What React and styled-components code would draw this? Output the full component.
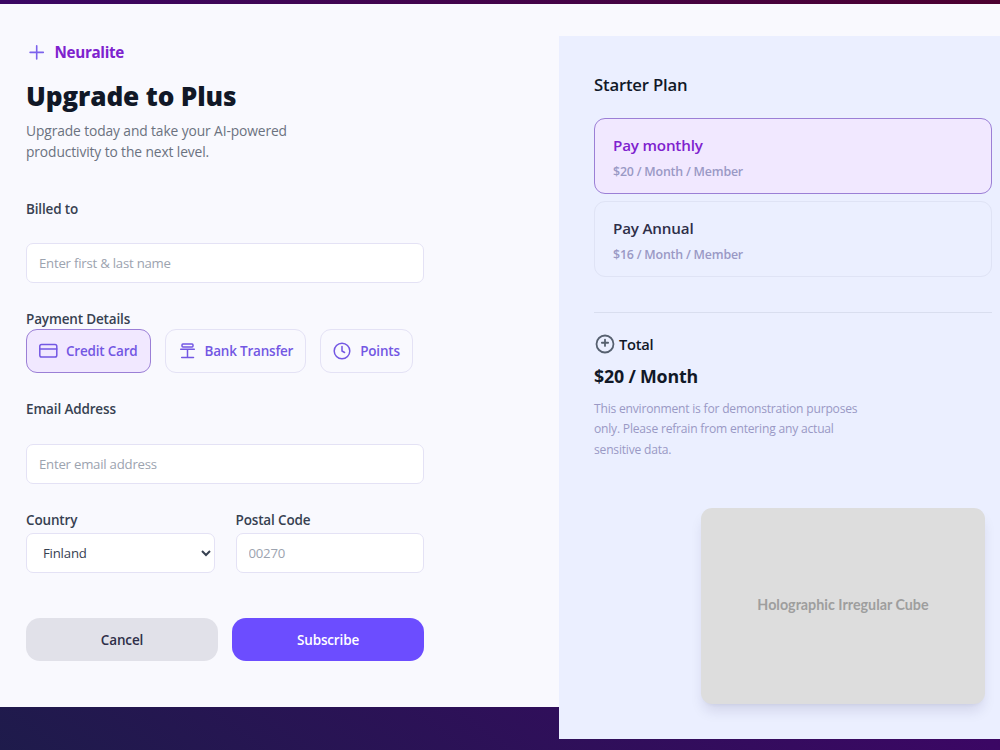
import React, { useState } from 'react';
import { createGlobalStyle, styled } from 'styled-components';

const GlobalStyle = createGlobalStyle`
  * {
    box-sizing: border-box;
  }

  body {
    margin: 0;
    font-family: 'Open Sans', 'Noto Sans', sans-serif;
    color: #111827;
  }

  h1, h2, h3, p {
    margin: 0;
  }

  button, input, select {
    font-family: inherit;
  }
`;

const Page = styled.main`
  height: 750px;
  padding-top: 4px;
  overflow: hidden;
  background: linear-gradient(to top right, #1e1b4b, #3b0764, #4c0030);
`;

const Card = styled.div`
  height: 703px;
  display: grid;
  grid-template-columns: 559px 1fr;
  background: #f9f9fe;
`;

const Checkout = styled.section`
  padding: 38px 0 0 26px;
`;

const Form = styled.form`
  width: 398px;
`;

const Brand = styled.div`
  height: 21px;
  display: flex;
  align-items: center;
  gap: 7.5px;
  font-size: 15.2px;
  font-weight: 700;
  letter-spacing: -0.3px;
  line-height: 21px;
  color: #7e22ce;
`;

const Title = styled.h1`
  margin-top: 17px;
  font-size: 26.2px;
  font-weight: 800;
  letter-spacing: -0.15px;
  line-height: 32px;
`;

const Lead = styled.p`
  width: 280px;
  margin-top: 8px;
  font-size: 13.8px;
  letter-spacing: -0.11px;
  line-height: 21.3px;
  color: #6b7280;
`;

const Label = styled.label`
  display: block;
  margin-top: ${(props) => props.$top}px;
  font-size: 13.5px;
  font-weight: 600;
  letter-spacing: -0.15px;
  line-height: 21px;
  color: #374151;
`;

const Input = styled.input`
  display: block;
  width: 100%;
  height: 40px;
  margin-top: ${(props) => props.$top}px;
  padding: 0 12px;
  border: 1px solid #e4e2f5;
  border-radius: 7px;
  background: #fff;
  font-size: 13.2px;
  letter-spacing: -0.23px;
  color: #374151;

  &::placeholder {
    color: #9ca3af;
  }
`;

const Select = styled.select`
  display: block;
  width: 100%;
  height: 40px;
  margin-top: 2px;
  padding: 0 0 0 12px;
  border: 1px solid #e4e2f5;
  border-radius: 7px;
  background: #fff;
  font-size: 13.2px;
  letter-spacing: -0.2px;
  color: #374151;
`;

const Methods = styled.div`
  display: flex;
  gap: 14px;
  margin-top: -1px;
`;

const Method = styled.button`
  height: 44px;
  display: flex;
  align-items: center;
  gap: 7px;
  padding: 1px 12px 0 11px;
  border: 1px solid ${(props) => (props.$active ? '#9b7fd6' : '#e4e2f5')};
  border-radius: 11px;
  background: ${(props) => (props.$active ? '#f1e8ff' : 'transparent')};
  font-size: 13.5px;
  font-weight: 600;
  letter-spacing: -0.21px;
  color: #7357e3;
`;

const Split = styled.div`
  display: grid;
  grid-template-columns: 1fr 1fr;
  gap: ${(props) => props.$gap}px;
  margin-top: ${(props) => props.$top}px;
`;

const Action = styled.button`
  height: 43px;
  padding-top: 3px;
  border: none;
  border-radius: 14px;
  background: ${(props) => (props.$primary ? '#6c4dff' : '#e1e1e9')};
  font-size: 13.5px;
  font-weight: 600;
  letter-spacing: -0.15px;
  color: ${(props) => (props.$primary ? '#fff' : '#2e2e48')};
`;

const Summary = styled.aside`
  height: 703px;
  margin-top: 32px;
  padding: 37px 8px 0 35px;
  background: #ebefff;
`;

const PlanTitle = styled.h2`
  font-size: 16.7px;
  font-weight: 600;
  letter-spacing: -0.19px;
  line-height: 24px;
`;

const Plans = styled.div`
  display: grid;
  gap: 7px;
  margin-top: 21px;
`;

const Plan = styled.div`
  height: 76px;
  padding: 14px 18px;
  border: 1px solid ${(props) => (props.$active ? '#9b7fd6' : '#dfe3f5')};
  border-radius: 11px;
  background: ${(props) => (props.$active ? '#f1e8ff' : 'transparent')};
`;

const PlanName = styled.h3`
  font-size: 15.2px;
  font-weight: 600;
  letter-spacing: -0.18px;
  line-height: 25px;
  color: ${(props) => (props.$active ? '#7e22ce' : '#2e2e48')};
`;

const PlanPrice = styled.p`
  margin-top: 3px;
  font-size: 12.4px;
  font-weight: 600;
  letter-spacing: -0.2px;
  line-height: 21px;
  color: #9a99c5;
`;

const Total = styled.div`
  display: flex;
  align-items: center;
  gap: 3px;
  margin-top: 35px;
  padding-top: 20px;
  border-top: 1px solid #d9deef;
  font-size: 14.7px;
  font-weight: 600;
  letter-spacing: -0.25px;
  line-height: 21px;
`;

const Amount = styled.p`
  margin-top: 9px;
  font-size: 17.8px;
  font-weight: 700;
  letter-spacing: -0.18px;
  line-height: 24px;
`;

const Note = styled.p`
  width: 285px;
  margin-top: 11px;
  font-size: 12.1px;
  letter-spacing: -0.21px;
  line-height: 20.3px;
  color: #9a99c5;
`;

const Artwork = styled.div`
  width: 284px;
  height: 196px;
  display: flex;
  align-items: center;
  justify-content: center;
  margin: 48px 7px 0 auto;
  padding-bottom: 2px;
  border-radius: 11px;
  background: #ddd;
  box-shadow: 0 9px 14px -3px rgba(30, 27, 75, 0.13), 0 3px 5px -4px rgba(30, 27, 75, 0.1);
  font-family: Lato, sans-serif;
  font-size: 14.3px;
  font-weight: 700;
  color: #9e9e9e;
`;

const Icon = ({ children, size = 21, color = 'currentColor', width = 1.5 }) => (
  <svg
    width={size}
    height={size}
    viewBox="0 0 21 21"
    fill="none"
    stroke={color}
    strokeWidth={width}
    strokeLinecap="round"
    strokeLinejoin="round"
  >
    {children}
  </svg>
);

const methods = [
  {
    name: 'Credit Card',
    icon: (
      <>
        <rect x="1.8" y="3.5" width="17" height="12.6" rx="1.8" />
        <path d="M1.8 8h17" />
      </>
    ),
  },
  {
    name: 'Bank Transfer',
    icon: (
      <>
        <rect x="5" y="3" width="11" height="3" rx="0.9" />
        <path d="M3.7 8.2h13.6M10.5 8.2v8.2M4.7 16.4h11.8" />
      </>
    ),
  },
  {
    name: 'Points',
    icon: (
      <>
        <circle cx="10" cy="10" r="7.8" />
        <path d="M10 5.4v4.6l2.6 1.5" />
      </>
    ),
  },
];

const plans = [
  { name: 'Pay monthly', price: '$20 / Month / Member' },
  { name: 'Pay Annual', price: '$16 / Month / Member' },
];

const App = () => {
  const [method, setMethod] = useState('Credit Card');
  const [plan, setPlan] = useState('Pay monthly');

  return (
    <>
      <GlobalStyle />
      <Page>
        <Card>
          <Checkout>
            <Form>
              <Brand>
                <Icon color="#7c62ec" width={1.6}>
                  <path d="M10.7 3.8v13.2M4.1 10.4h13.2" />
                </Icon>
                Neuralite
              </Brand>
              <Title>Upgrade to Plus</Title>
              <Lead>
                Upgrade today and take your AI-powered
                <br />
                productivity to the next level.
              </Lead>

              <Label $top={36}>Billed to</Label>
              <Input $top={23.4} placeholder="Enter first &amp; last name" />

              <Label $top={26}>Payment Details</Label>
              <Methods>
                {methods.map((item) => (
                  <Method
                    key={item.name}
                    type="button"
                    $active={item.name === method}
                    onClick={() => setMethod(item.name)}
                  >
                    <Icon>{item.icon}</Icon>
                    {item.name}
                  </Method>
                ))}
              </Methods>

              <Label $top={26}>Email Address</Label>
              <Input $top={24} placeholder="Enter email address" />

              <Split $gap={21} $top={26}>
                <div>
                  <Label $top={0}>Country</Label>
                  <Select defaultValue="Finland">
                    <option>Finland</option>
                  </Select>
                </div>
                <div>
                  <Label $top={0}>Postal Code</Label>
                  <Input $top={2} placeholder="00270" />
                </div>
              </Split>

              <Split $gap={14} $top={45}>
                <Action type="button">Cancel</Action>
                <Action type="button" $primary>
                  Subscribe
                </Action>
              </Split>
            </Form>
          </Checkout>

          <Summary>
            <PlanTitle>Starter Plan</PlanTitle>
            <Plans>
              {plans.map((item) => (
                <Plan key={item.name} $active={item.name === plan} onClick={() => setPlan(item.name)}>
                  <PlanName $active={item.name === plan}>{item.name}</PlanName>
                  <PlanPrice>{item.price}</PlanPrice>
                </Plan>
              ))}
            </Plans>
            <Total>
              <Icon size={22} color="#56606f" width={1.7}>
                <circle cx="10.5" cy="10.5" r="8.1" />
                <path d="M10.5 6.3v6M7.5 9.3h6" />
              </Icon>
              Total
            </Total>
            <Amount>$20 / Month</Amount>
            <Note>
              This environment is for demonstration purposes
              <br />
              only. Please refrain from entering any actual
              <br />
              sensitive data.
            </Note>
            <Artwork>Holographic Irregular Cube</Artwork>
          </Summary>
        </Card>
      </Page>
    </>
  );
};

export default App;
